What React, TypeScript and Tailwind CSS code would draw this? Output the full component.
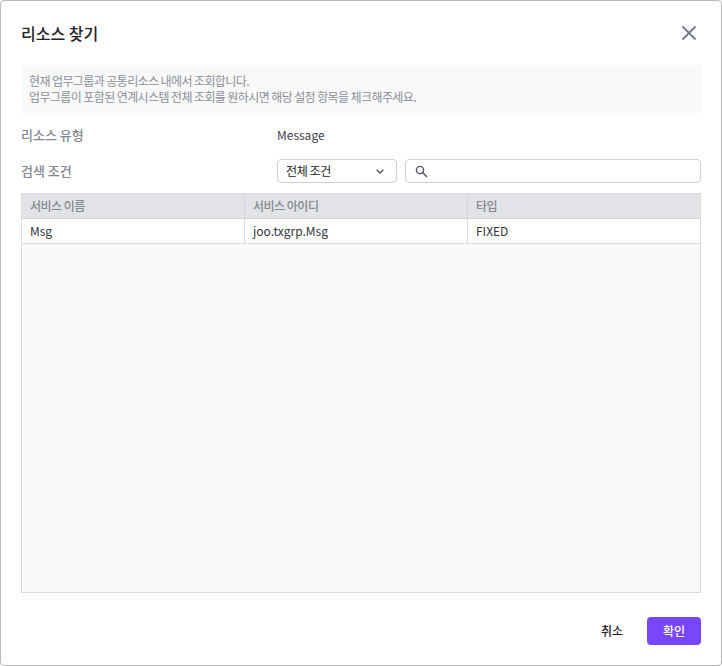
import React from "react";

export default function App() {
  return (
    <div className="w-[722px] h-[666px] bg-white border border-[#b8b8b8] rounded-[4px] flex flex-col px-5 font-['Noto_Sans_CJK_KR',sans-serif] overflow-hidden">
      <header className="h-[64px] shrink-0 flex items-center justify-between">
        <h1 className="text-[16px] font-medium text-[#1f2329] leading-[24px]">리소스 찾기</h1>
        <button className="w-[20px] h-[20px] mr-[2px] flex items-center justify-center text-[#737a85]">
          <svg width="16" height="16" viewBox="0 0 16 16" fill="none" stroke="currentColor" strokeWidth="1.8">
            <path d="M1.5 1.5 14.5 14.5M14.5 1.5 1.5 14.5" />
          </svg>
        </button>
      </header>

      <div className="h-[48px] shrink-0 bg-[#f9f9fa] px-2 flex flex-col justify-center text-[12px] leading-[16px] tracking-[-0.6px] text-[#8a8f98]">
        <p>현재 업무그룹과 공통리소스 내에서 조회합니다.</p>
        <p>업무그룹이 포함된 연계시스템 전체 조회를 원하시면 해당 설정 항목을 체크해주세요.</p>
      </div>

      <div className="h-[24px] mt-[10px] shrink-0 flex items-center">
        <span className="w-[256px] text-[13px] font-medium text-[#83878f]">리소스 유형</span>
        <span className="text-[12px] text-[#3f444b]">Message</span>
      </div>

      <div className="h-[24px] mt-[12px] shrink-0 flex items-center">
        <span className="w-[256px] text-[13px] font-medium text-[#83878f]">검색 조건</span>
        <div className="w-[120px] h-[24px] border border-[#ced0d4] rounded-[4px] flex items-center justify-between pl-2 pr-[12px]">
          <span className="text-[12px] tracking-[-0.4px] text-[#1b1d21]">전체 조건</span>
          <svg width="8" height="5" viewBox="0 0 8 5" fill="none" stroke="#4b5058" strokeWidth="1.3">
            <path d="M.7.7 4 4 7.3.7" />
          </svg>
        </div>
        <div className="ml-2 flex-1 h-[24px] border border-[#ced0d4] rounded-[4px] flex items-center pl-[9px]">
          <svg width="13" height="13" viewBox="0 0 13 13" fill="none" stroke="#50555c" strokeWidth="1.4">
            <circle cx="5" cy="5" r="3.6" />
            <path d="M7.8 7.8 12 12" />
          </svg>
        </div>
      </div>

      <div className="mt-[10px] flex-1 border border-[#d9dadd] bg-[#fafafa] flex flex-col text-[12px]">
        <div className="h-[25px] shrink-0 bg-[#e1e3e7] border-b border-[#d2d4d8] grid grid-cols-[223px_223px_1fr] font-medium tracking-[-0.5px] text-[#85898f]">
          <div className="pl-2 flex items-center border-r border-[#d2d4d8]">서비스 이름</div>
          <div className="pl-2 flex items-center border-r border-[#d2d4d8]">서비스 아이디</div>
          <div className="pl-2 flex items-center">타입</div>
        </div>
        <div className="h-[25px] shrink-0 bg-white border-b border-[#d9dadd] grid grid-cols-[223px_223px_1fr] text-[#31353b]">
          <div className="pl-2 flex items-center border-r border-[#d9dadd]">Msg</div>
          <div className="pl-2 flex items-center border-r border-[#d9dadd]">joo.txgrp.Msg</div>
          <div className="pl-2 flex items-center">FIXED</div>
        </div>
      </div>

      <footer className="h-[72px] shrink-0 pt-[24px] flex justify-end items-start gap-[8px]">
        <button className="w-[54px] h-[28px] text-[12px] font-medium text-[#1f2329]">취소</button>
        <button className="w-[54px] h-[28px] rounded-[4px] bg-[#7847fb] text-[12px] font-medium text-white">확인</button>
      </footer>
    </div>
  );
}
